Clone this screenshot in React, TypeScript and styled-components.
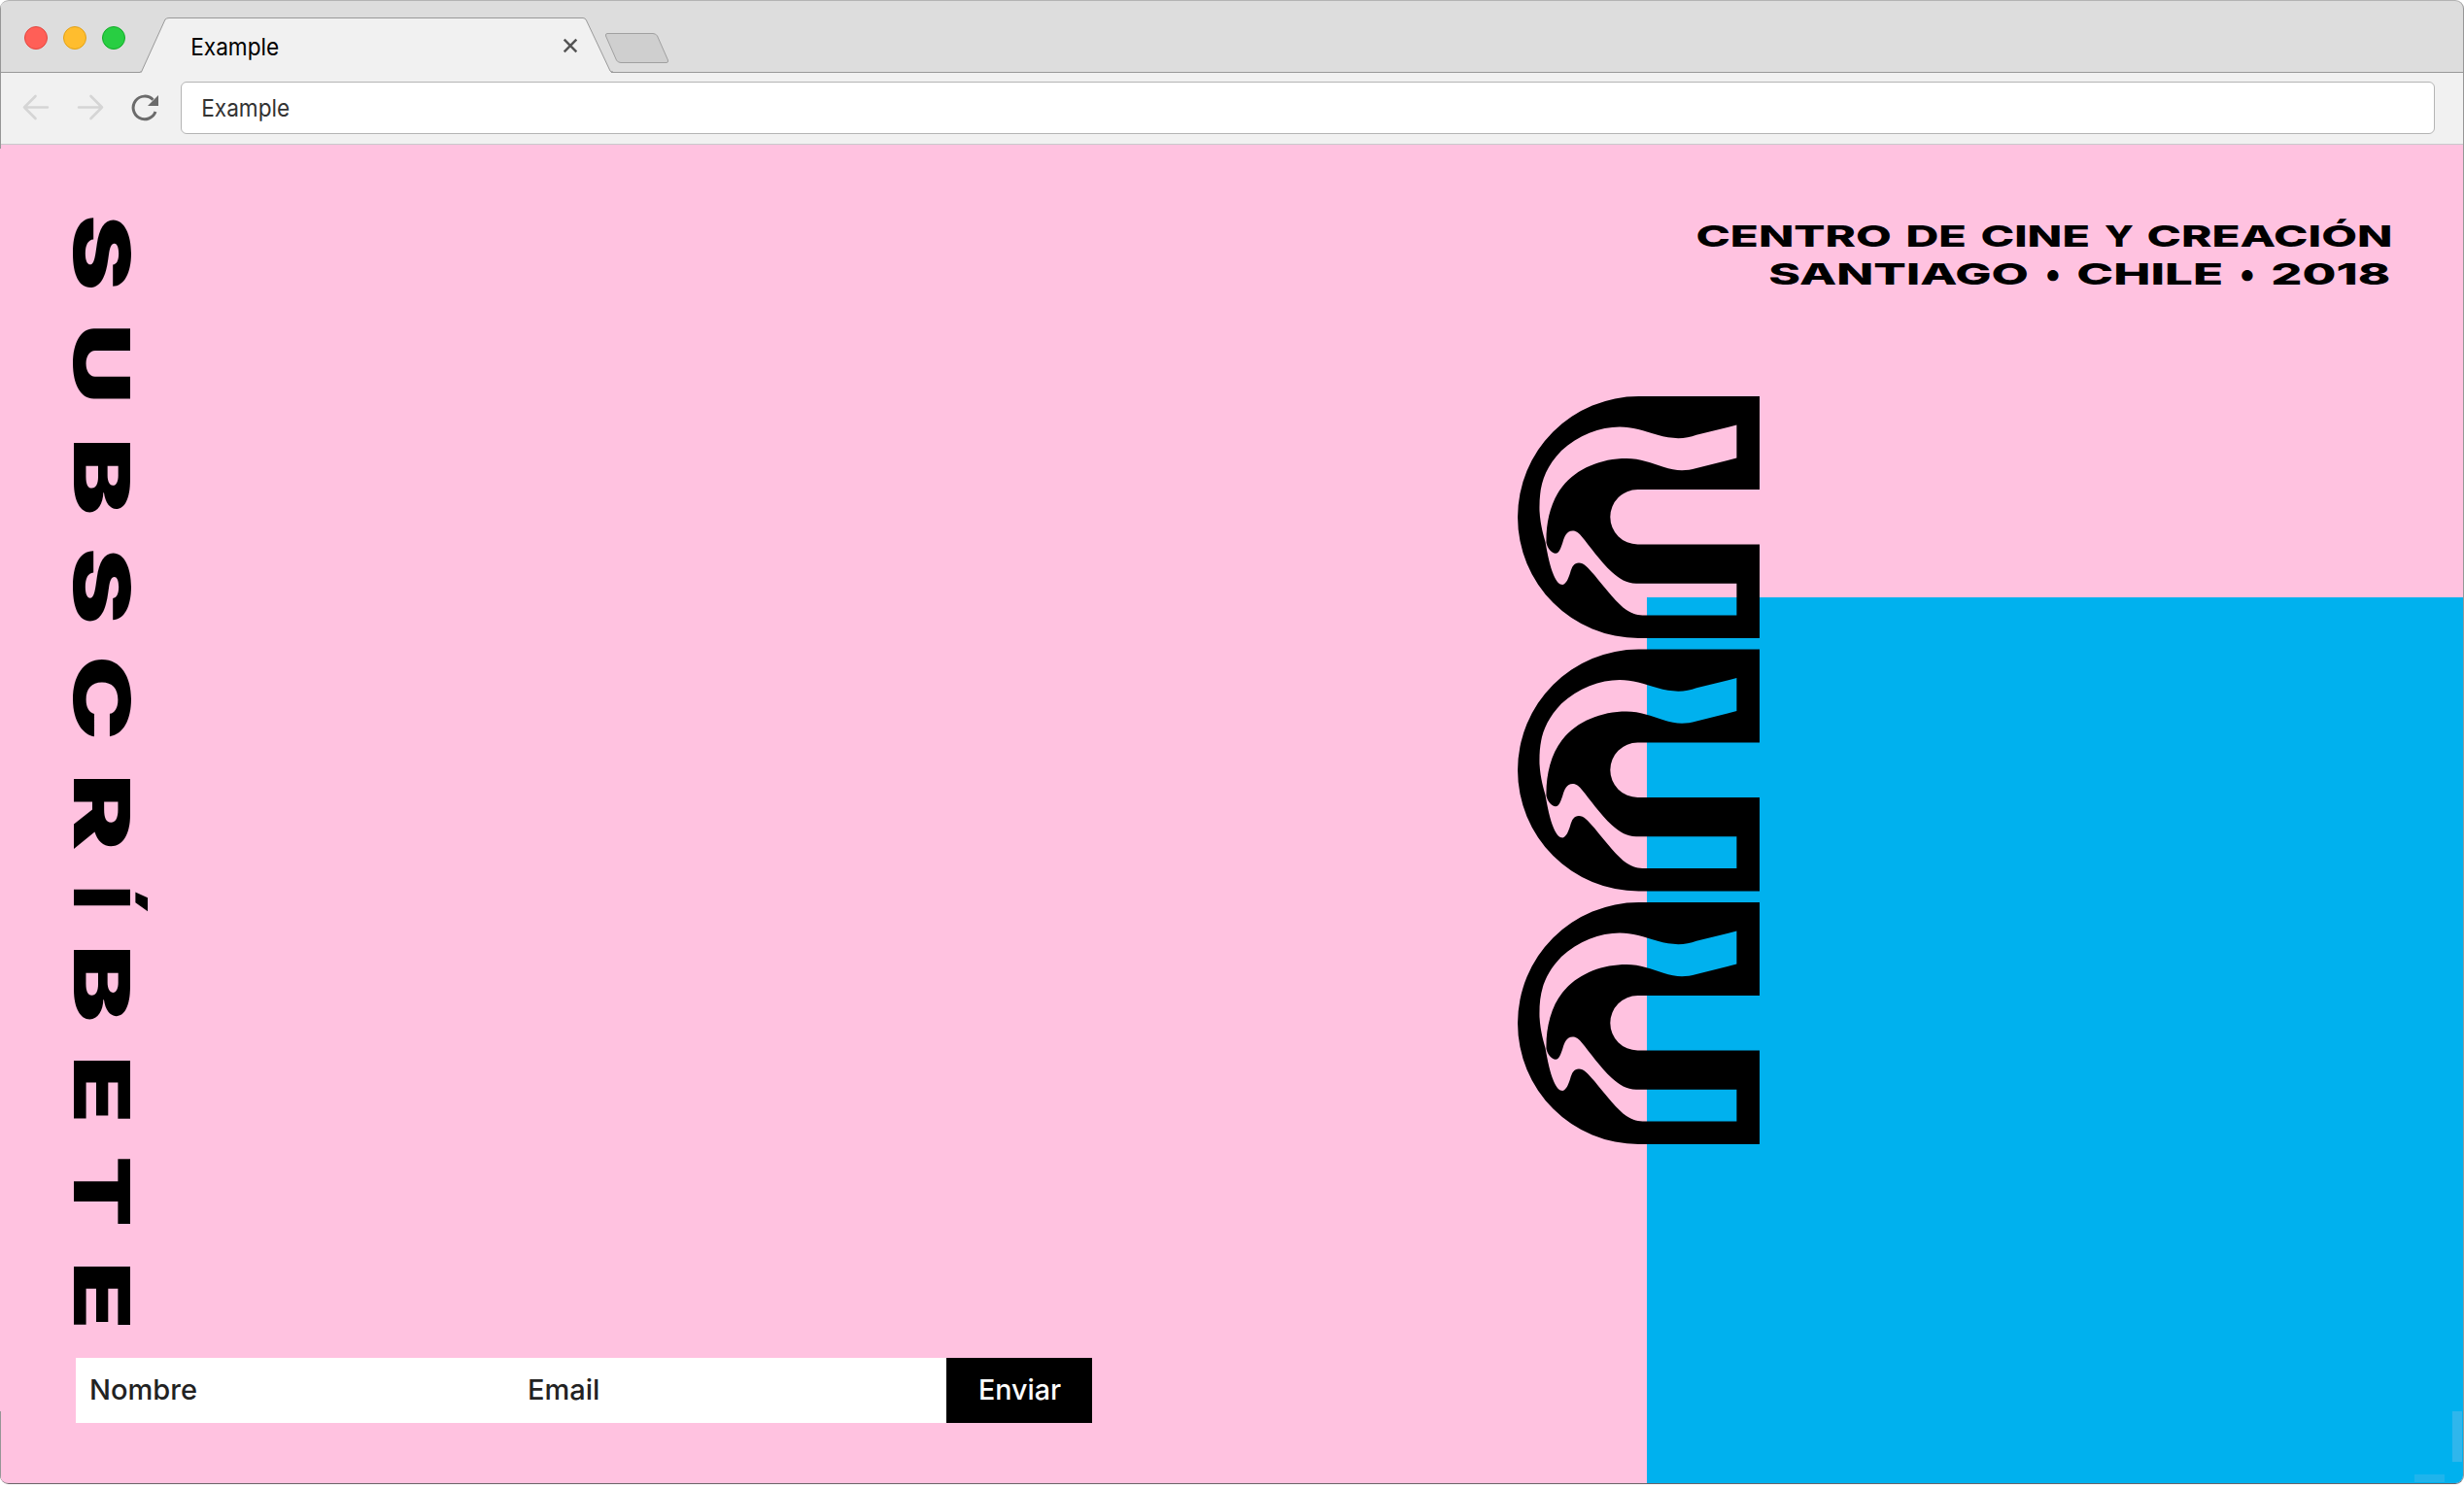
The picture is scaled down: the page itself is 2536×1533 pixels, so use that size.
import React, { useMemo } from "react";
import styled, { createGlobalStyle } from "styled-components";

const FONT = 'Inter, "Liberation Sans", sans-serif';
const PINK = "#ffc2e0";
const BLUE = "#00b1ee";

const GlobalStyle = createGlobalStyle`
  * { box-sizing: border-box; }
  body { margin: 0; background: #fff; font-family: ${FONT}; overflow: hidden; }
`;

/* ---------- stretched lettering ---------- */

function measureInk(text: string, size: number, weight: number) {
  const ctx = document.createElement("canvas").getContext("2d")!;
  ctx.font = `${weight} ${size}px ${FONT}`;
  const m = ctx.measureText(text);
  return { left: -m.actualBoundingBoxLeft, width: m.actualBoundingBoxLeft + m.actualBoundingBoxRight };
}

const Slot = styled.span<{ $length: number }>`
  display: block;
  flex: none;
  inline-size: ${(p) => p.$length}px;
  white-space: nowrap;
`;

const Glyphs = styled.span<{ $size: number; $weight: number; $line: number }>`
  display: block;
  inline-size: max-content;
  font-size: ${(p) => p.$size}px;
  font-weight: ${(p) => p.$weight};
  line-height: ${(p) => p.$line}px;
  transform-origin: 0 0;
`;

type FitProps = {
  children: string;
  length: number;
  size: number;
  weight: number;
  line: number;
  vertical?: boolean;
  base?: string;
};

/* Stretches its text along the line so that the ink is exactly `length` long. */
function Fit({ children, length, size, weight, line, vertical, base }: FitProps) {
  const transform = useMemo(() => {
    const ink = measureInk(base ?? children, size, weight);
    const s = length / ink.width;
    const shift = -ink.left * s;
    return vertical ? `translateY(${shift}px) scaleY(${s})` : `translateX(${shift}px) scaleX(${s})`;
  }, [children, length, size, weight, vertical, base]);
  return (
    <Slot $length={length}>
      <Glyphs $size={size} $weight={weight} $line={line} style={{ transform }}>
        {children}
      </Glyphs>
    </Slot>
  );
}

/* ---------- browser window ---------- */

const Screen = styled.div`
  width: 2536px;
  height: 1533px;
  background: #fff;
`;

const Window = styled.div`
  width: 2536px;
  height: 1528px;
  display: flex;
  flex-direction: column;
  border-radius: 9px;
  overflow: hidden;
  border: 1px solid #b3b3b3;
  border-left: 0;
  padding-left: 1px;
  border-right-color: #969696;
  border-bottom-color: #6c6469;
  background: linear-gradient(#969696 152px, ${PINK} 152px, ${PINK} 1452px, #969696 1452px);
`;

const TabStrip = styled.div`
  flex: none;
  height: 74px;
  display: flex;
  background: #dddddd;
  border-bottom: 1px solid #999;
`;

const Lights = styled.div`
  width: 143px;
  flex: none;
  display: flex;
  gap: 16px;
  padding: 26px 0 0 24px;
`;

const Light = styled.span<{ $fill: string; $edge: string }>`
  width: 24px;
  height: 24px;
  border-radius: 50%;
  background: ${(p) => p.$fill};
  border: 1px solid ${(p) => p.$edge};
`;

const Tab = styled.div`
  position: relative;
  flex: none;
  width: 487px;
  height: 74px;
  padding: 32px 0 0 54px;
  color: #000;
`;

const TabShape = styled.svg`
  position: absolute;
  left: 0;
  top: 16px;
`;

const TabRow = styled.div`
  position: relative;
  display: flex;
  justify-content: space-between;
  width: 397px;
`;

const CloseIcon = styled.svg`
  margin-top: 6px;
  width: 16px;
  height: 16px;
`;

const NewTab = styled.svg`
  flex: none;
  margin: 32px 0 0 -9px;
`;

const Toolbar = styled.div`
  flex: none;
  height: 74px;
  display: flex;
  align-items: flex-start;
  background: #f1f1f1;
  border-bottom: 1px solid #c9c9cc;
`;

const NavIcons = styled.svg`
  flex: none;
`;

const AddressBar = styled.div`
  flex: none;
  width: 2320px;
  height: 54px;
  margin-top: 9px;
  padding: 11px 0 0 22px;
  border: 1px solid #b4b4b4;
  border-radius: 6px;
  background: #fff;
  color: #333;
`;

/* ---------- page ---------- */

const Page = styled.main`
  flex: 1;
  display: grid;
  grid-template-columns: 1694px 1fr;
  position: relative;
  background: ${PINK};
  color: #000;
`;

const LeftColumn = styled.section`
  display: flex;
  flex-direction: column;
  padding: 75px 0 0 77px;
`;

const RightColumn = styled.section`
  display: flex;
  flex-direction: column;
`;

const VerticalTitle = styled.h1`
  margin: 0 0 0 -13px;
  height: 1174px;
  width: 80px;
  display: flex;
  writing-mode: vertical-rl;
  text-orientation: sideways;
`;

const Letter = styled.span<{ $gap: number }>`
  display: block;
  flex: none;
  margin-inline-start: ${(p) => p.$gap}px;
`;

const SignUp = styled.form`
  display: flex;
  width: 1046px;
  height: 67px;
  background: #fff;
  color: #222;
`;

const Field = styled.label<{ $width: number; $pad: number }>`
  width: ${(p) => p.$width}px;
  padding: 16px 0 0 ${(p) => p.$pad}px;
`;

const Send = styled.button`
  width: 150px;
  border: 0;
  margin: 0;
  padding: 0 0 1px 35px;
  display: block;
  text-align: left;
  font-family: inherit;
  background: #000;
  color: #fff;
`;

const Tagline = styled.header`
  height: 466px;
  padding: 74px 75px 0 0;
  display: flex;
  flex-direction: column;
  align-items: flex-end;
`;

const Line = styled.div`
  display: flex;
  height: 39px;
`;

const Word = styled.span<{ $gap: number }>`
  margin-left: ${(p) => p.$gap}px;
`;

const BluePanel = styled.div`
  flex: 1;
  background:
    linear-gradient(#2fb6ec, #2fb6ec) right 1px bottom 22px / 10px 52px no-repeat,
    linear-gradient(#1fb4ec, #1fb4ec) right 19px bottom 1px / 31px 8px no-repeat,
    ${BLUE};
`;

const Logo = styled.svg`
  position: absolute;
  left: 1561px;
  top: 259px;
`;

const TITLE: { char: string; gap: number; length: number; base?: string }[] = [
  { char: "S", gap: 0, length: 72.7 },
  { char: "U", gap: 40.6, length: 74.2 },
  { char: "B", gap: 43.3, length: 73.8 },
  { char: "S", gap: 38.3, length: 73.1 },
  { char: "C", gap: 38.3, length: 80.7 },
  { char: "R", gap: 41.6, length: 73.1 },
  { char: "Í", gap: 41.3, length: 18, base: "I" },
  { char: "B", gap: 44, length: 73.9 },
  { char: "E", gap: 40.5, length: 61.6 },
  { char: "T", gap: 39.8, length: 68.1 },
  { char: "E", gap: 41.8, length: 62 },
];

type WordSpec = { text: string; gap: number; length: number; size?: number };

const LINES: WordSpec[][] = [
  [
    { text: "CENTRO", gap: 0, length: 199 },
    { text: "DE", gap: 17, length: 60 },
    { text: "CINE", gap: 17, length: 110 },
    { text: "Y", gap: 16, length: 30 },
    { text: "CREACIÓN", gap: 15, length: 249.5 },
  ],
  [
    { text: "SANTIAGO", gap: 0, length: 265 },
    { text: "•", gap: 20, length: 12, size: 36 },
    { text: "CHILE", gap: 20, length: 148 },
    { text: "•", gap: 20, length: 12, size: 36 },
    { text: "2018", gap: 20, length: 121 },
  ],
];

const MARK =
  "M124.500 0H249V96H123.500A28.200 28.200 0 0 0 123.500 152.400H249V249H124.500A124.500 124.500 0 0 1 124.500 0Z" +
  "M225.400 29.600L184 39.800C172 44.500 158 44 144 39.800C130 35.500 118 31.400 105 31.400C85 31.400 62 40 45 56C26 76 22 94 22.500 118C23.500 134 27 144 28.500 150C31 164 33 174 37 184C40 191 43 194 46.300 194C50 193 52 188 54 182C56 175 58 171.500 63 171.500C68 171.500 72 176 79 184C92 200 103 214 112 220C119 224.500 124 225.500 131 225.500H225.400V192.700H122C112 192.500 105 188 97 181C85 170 74 154 66 144.500C62 140 60 138.600 56.500 138.600C50.500 138.600 48 145 46.500 150C44.500 156 43 161.700 39 161.700C35 161.500 31 157 29.500 151C29 130 34 108 46 93C61 74 86 64 112 64C126 64 138 69 150 72.800C162 76.800 172 77.500 184 74L225.400 63.600Z";

export default function App() {
  return (
    <Screen>
      <GlobalStyle />
      <Window>
        <TabStrip>
          <Lights>
            <Light $fill="#ff5f57" $edge="#e2463f" />
            <Light $fill="#ffbd2e" $edge="#e1a116" />
            <Light $fill="#28ce42" $edge="#12ac28" />
          </Lights>
          <Tab>
            <TabShape width="487" height="58" viewBox="0 0 487 58">
              <path d="M0 57.500H1.500L26 3Q27.500 1.500 30 1.500H456Q458.500 1.500 459.500 4L484 56L485 57.500V58H0Z" fill="#f1f1f1" />
              <path d="M0 57H1.500L26 3Q27.500 1.500 30 1.500H456Q458.500 1.500 459.500 4L484 56Q484.500 57 487 57" fill="none" stroke="#999" />
            </TabShape>
            <TabRow>
              <Fit length={89} size={24.5} weight={400} line={30}>Example</Fit>
              <CloseIcon viewBox="0 0 16 16">
                <path d="M1.700 1.700L14.300 14.300M14.300 1.700L1.700 14.300" stroke="#555" strokeWidth="2.500" />
              </CloseIcon>
            </TabRow>
          </Tab>
          <NewTab width="68" height="34" viewBox="0 0 68 34">
            <path d="M3 1.500H50Q53 1.500 54.500 4L65.500 29Q66 31.500 64 31.500H17Q14 31.500 12.500 29L1.500 4Q1 1.500 3 1.500Z" fill="#cfcfcf" stroke="#a0a0a0" />
          </NewTab>
        </TabStrip>
        <Toolbar>
          <NavIcons width="185" height="73" viewBox="1 75 185 73">
            <g fill="none" stroke="#d5d5d5" strokeWidth="2.600" strokeLinecap="round" strokeLinejoin="round">
              <path d="M49 110.500H25M36.500 99L25 110.500L36.500 122" />
              <path d="M81 110.500H105M93.500 99L105 110.500L93.500 122" />
            </g>
            <path d="M160 115A11.800 11.800 0 1 1 157.500 102.800" fill="none" stroke="#6b6b6b" strokeWidth="3" />
            <path d="M163 98V109H152Z" fill="#6b6b6b" />
          </NavIcons>
          <AddressBar>
            <Fit length={89} size={24.5} weight={400} line={30}>Example</Fit>
          </AddressBar>
        </Toolbar>
        <Page>
          <LeftColumn>
            <VerticalTitle>
              {TITLE.map((l, i) => (
                <Letter key={i} $gap={l.gap}>
                  <Fit vertical length={l.length} size={79.3} weight={900} line={80} base={l.base}>
                    {l.char}
                  </Fit>
                </Letter>
              ))}
            </VerticalTitle>
            <SignUp>
              <Field $width={448} $pad={16}>
                <Fit length={108} size={29} weight={450} line={34}>Nombre</Fit>
              </Field>
              <Field $width={448} $pad={19}>
                <Fit length={71} size={29} weight={450} line={34}>Email</Fit>
              </Field>
              <Send type="button">
                <Fit length={83} size={29} weight={450} line={34}>Enviar</Fit>
              </Send>
            </SignUp>
          </LeftColumn>
          <RightColumn>
            <Tagline>
              {LINES.map((words, i) => (
                <Line key={i}>
                  {words.map((w, j) => (
                    <Word key={j} $gap={w.gap}>
                      <Fit length={w.length} size={w.size ?? 30.5} weight={800} line={39}>{w.text}</Fit>
                    </Word>
                  ))}
                </Line>
              ))}
            </Tagline>
            <BluePanel />
          </RightColumn>
          <Logo width="250" height="772" viewBox="0 0 250 772">
            {[0, 260.5, 521].map((y) => (
              <path key={y} d={MARK} transform={`translate(0 ${y})`} fill="#000" fillRule="evenodd" />
            ))}
          </Logo>
        </Page>
      </Window>
    </Screen>
  );
}
